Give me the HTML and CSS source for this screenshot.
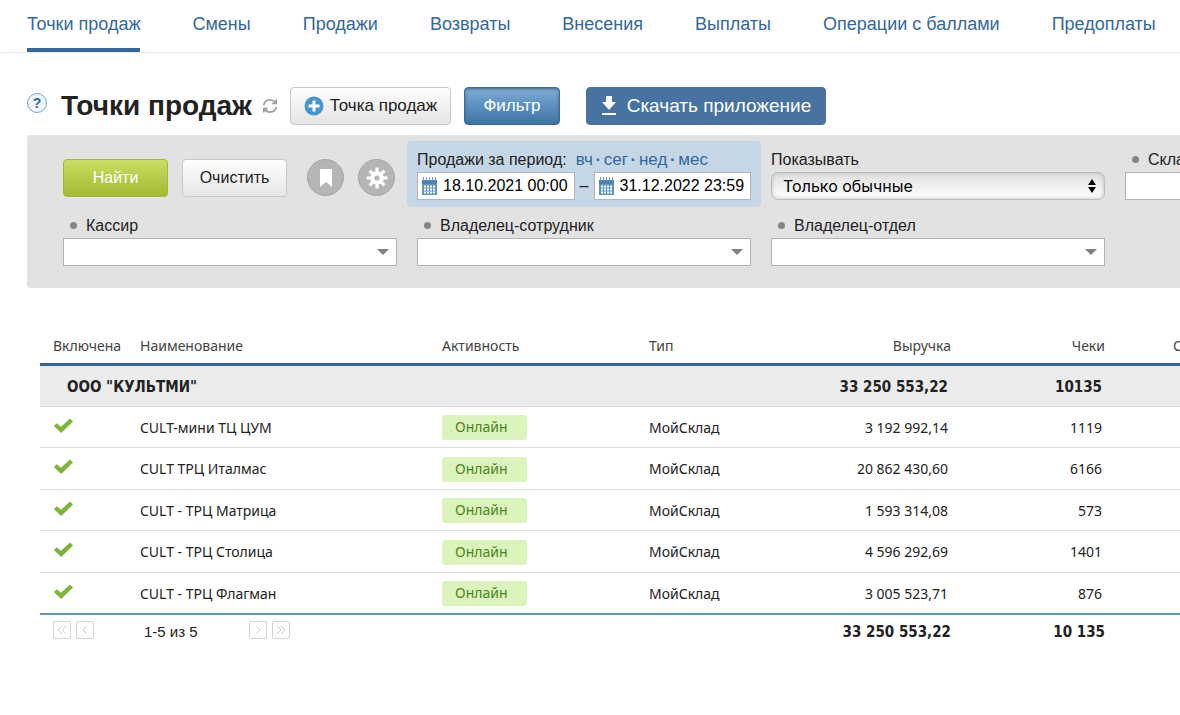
FILE: index.html
```html
<!DOCTYPE html>
<html lang="ru">
<head>
<meta charset="utf-8">
<title>Точки продаж</title>
<link rel="stylesheet" href="styles.css">
</head>
<body>
<svg class="sprite" aria-hidden="true">
  <symbol id="check" viewBox="0 0 20 16"><path d="M.8 8 3.800 5.200l4.200 3.600L17 .6l3 3L8.200 15z" fill="#7db43a"/></symbol>
  <symbol id="calendar" viewBox="0 0 17 18"><path d="M1 3h15v15H1z" fill="#5f96c3"/><path d="M1 3h15v4H1z" fill="#4a84b4"/><path d="M2.500 0v4M5.500 0v4M8.500 0v4M11.500 0v4M14.500 0v4" stroke="#8199ad"/><path d="M3 9.500h11M3 12.500h11M3 15.500h11" stroke="#fff" stroke-width="2" stroke-dasharray="2 1"/></symbol>
</svg>

<nav class="tabs">
  <a class="tab tab-active" href="#">Точки продаж</a>
  <a class="tab" href="#">Смены</a>
  <a class="tab" href="#">Продажи</a>
  <a class="tab" href="#">Возвраты</a>
  <a class="tab" href="#">Внесения</a>
  <a class="tab" href="#">Выплаты</a>
  <a class="tab" href="#">Операции с баллами</a>
  <a class="tab" href="#">Предоплаты</a>
</nav>

<main class="page">
  <header class="toolbar">
    <button class="help" type="button" aria-label="Справка">?</button>
    <h1 class="title">Точки продаж</h1>
    <button class="refresh" type="button" aria-label="Обновить">
      <svg width="16" height="16" viewBox="0 0 16 16" fill="none" stroke="#9b9b9b" stroke-width="1.700"><path d="M1.800 7.200C2.200 4 4.800 2 8 2c2.200 0 4 .8 5.200 2.500M14.200 1.500v4h-4M14.200 8.800C13.800 12 11.200 14 8 14c-2.200 0-4-.8-5.200-2.500M1.800 14.500v-4h4"/></svg>
    </button>
    <button class="btn btn-add" type="button">
      <svg width="20" height="20" viewBox="0 0 20 20"><circle cx="10" cy="10" r="9.500" fill="#4496d1"/><path d="M10 4.500v11M4.500 10h11" stroke="#fff" stroke-width="3"/></svg>
      Точка продаж
    </button>
    <button class="btn btn-filter" type="button">Фильтр</button>
    <button class="btn btn-download" type="button">
      <svg width="16" height="20" viewBox="0 0 16 20" fill="#fff"><path d="M5 0h6v6h4l-7 8-7-8h4zM1 17h14v2H1z"/></svg>
      Скачать приложение
    </button>
  </header>

  <form class="filter">
    <div class="actions">
      <button class="btn btn-find" type="button">Найти</button>
      <button class="btn btn-clear" type="button">Очистить</button>
      <button class="round round-first" type="button" aria-label="Закладки"><svg width="12" height="18" viewBox="0 0 12 18"><path d="M0 0h12v18l-6-5-6 5z" fill="#fff"/></svg></button>
      <button class="round" type="button" aria-label="Настройки"><svg width="22" height="22" viewBox="-11 -11 22 22"><g stroke="#fff" stroke-width="3.200"><path d="M0-10.500v21M-10.500 0h21M-7.400-7.400 7.400 7.400M-7.400 7.400 7.400-7.400"/></g><circle r="6.800" fill="#fff"/><circle r="2.600" fill="#b5b5b5"/></svg></button>
    </div>
    <div class="field period">
      <div class="label-row">
        <label for="from">Продажи за период:</label>
        <span class="presets"><a href="#">вч</a><i>·</i><a href="#">сег</a><i>·</i><a href="#">нед</a><i>·</i><a href="#">мес</a></span>
      </div>
      <div class="range">
        <div class="box date"><svg width="17" height="18"><use href="#calendar"/></svg><input id="from" type="text" value="18.10.2021 00:00"></div>
        <span class="dash">–</span>
        <div class="box date"><svg width="17" height="18"><use href="#calendar"/></svg><input type="text" value="31.12.2022 23:59" aria-label="Конец периода"></div>
      </div>
    </div>
    <div class="field">
      <div class="label-row"><label for="show">Показывать</label></div>
      <div class="select-wrap">
        <select id="show" class="select"><option>Только обычные</option></select>
        <svg class="select-arrows" width="8" height="16" viewBox="0 0 8 16"><path d="M4 1l4 6H0zM4 15l4-6H0z"/></svg>
      </div>
    </div>
    <div class="field">
      <div class="label-row dotted"><label for="store">Склад</label></div>
      <div class="box"><input id="store" type="text"><button class="drop" type="button" aria-label="Выбрать склад"></button></div>
    </div>
    <div class="field">
      <div class="label-row dotted"><label for="cashier">Кассир</label></div>
      <div class="box"><input id="cashier" type="text"><button class="drop" type="button" aria-label="Выбрать кассира"></button></div>
    </div>
    <div class="field">
      <div class="label-row dotted"><label for="owner">Владелец-сотрудник</label></div>
      <div class="box"><input id="owner" type="text"><button class="drop" type="button" aria-label="Выбрать сотрудника"></button></div>
    </div>
    <div class="field">
      <div class="label-row dotted"><label for="dept">Владелец-отдел</label></div>
      <div class="box"><input id="dept" type="text"><button class="drop" type="button" aria-label="Выбрать отдел"></button></div>
    </div>
  </form>

  <table class="grid">
    <colgroup><col class="c-on"><col class="c-name"><col class="c-act"><col class="c-type"><col class="c-rev"><col class="c-chk"><col></colgroup>
    <thead>
      <tr><th>Включена</th><th>Наименование</th><th>Активность</th><th>Тип</th><th class="num">Выручка</th><th class="num">Чеки</th><th class="avg">Средний чек</th></tr>
    </thead>
    <tbody>
      <tr class="group"><td colspan="4">ООО "КУЛЬТМИ"</td><td class="num">33 250 553,22</td><td class="num">10135</td><td></td></tr>
      <tr><td><svg class="check" width="20" height="16"><use href="#check"/></svg></td><td>CULT-мини ТЦ ЦУМ</td><td><span class="badge">Онлайн</span></td><td>МойСклад</td><td class="num">3 192 992,14</td><td class="num">1119</td><td></td></tr>
      <tr><td><svg class="check" width="20" height="16"><use href="#check"/></svg></td><td>CULT ТРЦ Италмас</td><td><span class="badge">Онлайн</span></td><td>МойСклад</td><td class="num">20 862 430,60</td><td class="num">6166</td><td></td></tr>
      <tr><td><svg class="check" width="20" height="16"><use href="#check"/></svg></td><td>CULT - ТРЦ Матрица</td><td><span class="badge">Онлайн</span></td><td>МойСклад</td><td class="num">1 593 314,08</td><td class="num">573</td><td></td></tr>
      <tr><td><svg class="check" width="20" height="16"><use href="#check"/></svg></td><td>CULT - ТРЦ Столица</td><td><span class="badge">Онлайн</span></td><td>МойСклад</td><td class="num">4 596 292,69</td><td class="num">1401</td><td></td></tr>
      <tr><td><svg class="check" width="20" height="16"><use href="#check"/></svg></td><td>CULT - ТРЦ Флагман</td><td><span class="badge">Онлайн</span></td><td>МойСклад</td><td class="num">3 005 523,71</td><td class="num">876</td><td></td></tr>
    </tbody>
    <tfoot>
      <tr>
        <td colspan="4">
          <div class="pager">
            <button type="button" aria-label="Первая"><svg width="10" height="10" viewBox="0 0 10 10"><path d="M5 1 1 5l4 4M9 1 5 5l4 4"/></svg></button>
            <button type="button" aria-label="Назад"><svg width="10" height="10" viewBox="0 0 10 10"><path d="M6.500 1.500 3 5l3.500 3.500"/></svg></button>
            <span class="pager-text">1-5 из 5</span>
            <button type="button" aria-label="Вперёд"><svg width="10" height="10" viewBox="0 0 10 10"><path d="M3.500 1.500 7 5 3.500 8.500"/></svg></button>
            <button type="button" aria-label="Последняя"><svg width="10" height="10" viewBox="0 0 10 10"><path d="m1 1 4 4-4 4M5 1l4 4-4 4"/></svg></button>
          </div>
        </td>
        <td class="num">33 250 553,22</td><td class="num">10 135</td><td></td>
      </tr>
    </tfoot>
  </table>
</main>
</body>
</html>
```
FILE: styles.css
```css
* { box-sizing: border-box; }

body {
  margin: 0;
  overflow-x: hidden;
  background: #fff;
  color: #222;
  font: 16px/20px "Liberation Sans", sans-serif;
}

button, input, select { font: inherit; margin: 0; }
button { cursor: pointer; }

.sprite { display: none; }

.tabs {
  display: flex;
  gap: 52px;
  padding: 0 27px;
  border-bottom: 1px solid #ebebeb;
  overflow: hidden;
}

.tab {
  padding: 14px 0;
  border-bottom: 4px solid transparent;
  color: #33689b;
  font-size: 18px;
  text-decoration: none;
  white-space: nowrap;
}

.tab-active { border-color: #33689b; }

.page { padding: 34px 0 0 27px; overflow: hidden; }

.toolbar { display: flex; align-items: center; }

.help {
  width: 20px;
  height: 20px;
  margin-bottom: 6px;
  padding: 0;
  border: 1px solid #78a3cc;
  border-radius: 50%;
  background: #eef6fd;
  color: #33689b;
  font-size: 14px;
  font-weight: bold;
  line-height: 18px;
}

.title {
  margin: 0 10px 0 14px;
  font-size: 28px;
  line-height: 36px;
  white-space: nowrap;
}

.refresh {
  display: flex;
  margin-right: 12px;
  padding: 0;
  border: 0;
  background: none;
}

.btn {
  display: flex;
  align-items: center;
  justify-content: center;
  height: 38px;
  padding: 0;
  border: 1px solid #c8c8c8;
  border-radius: 4px;
  white-space: nowrap;
}

.btn-add {
  gap: 6px;
  width: 161px;
  background: linear-gradient(#fff, #e4e4e4);
  color: #222;
  font-size: 17px;
}

.btn-filter {
  width: 96px;
  margin-left: 13px;
  border-color: #3b6c98;
  background: linear-gradient(#7eacd5, #3d73a6);
  box-shadow: inset 0 1px 3px #3f6484;
  color: #fff;
  font-size: 17px;
}

.btn-download {
  gap: 10px;
  width: 240px;
  margin-left: 26px;
  border-color: #48729f;
  background: #48729f;
  color: #fff;
  font-size: 19px;
}

.filter {
  display: grid;
  grid-template-columns: repeat(4, 334px);
  column-gap: 20px;
  row-gap: 6px;
  width: max-content;
  margin-top: 10px;
  padding: 6px 36px 22px;
  border-radius: 4px;
  background: #e2e2e2;
}

.actions { display: flex; gap: 14px; padding-top: 18px; }

.btn-find, .btn-clear { width: 105px; }

.btn-find {
  border-color: #a2b83a;
  background: linear-gradient(#cbdd60, #a2b932);
  color: #fff;
}

.btn-clear { background: linear-gradient(#fff, #e6e6e6); color: #222; }

.round {
  display: flex;
  align-items: center;
  justify-content: center;
  width: 37px;
  height: 37px;
  padding: 0;
  border: 1px solid #a5a5a5;
  border-radius: 50%;
  background: #b5b5b5;
}

.round-first { margin-left: 6px; }

.field:nth-child(-n+4) { padding-top: 6px; }

.filter .period {
  margin: 0 -10px;
  padding: 6px 10px 7px;
  border-radius: 4px;
  background: #c5d7e7;
}

.label-row {
  display: flex;
  align-items: center;
  gap: 9px;
  height: 25px;
  white-space: nowrap;
}

.dotted { padding-left: 7px; }

.dotted::before {
  content: "";
  width: 7px;
  height: 7px;
  border-radius: 50%;
  background: #858585;
}

.presets { display: flex; font-size: 17px; }
.presets a { color: #33689b; text-decoration: none; }
.presets i { width: 11px; color: #33689b; font-style: normal; font-weight: bold; text-align: center; }

.box {
  display: flex;
  align-items: center;
  height: 28px;
  border: 1px solid #b4b4b4;
  background: #fff;
}

.box input {
  flex: 1;
  min-width: 0;
  height: 100%;
  padding: 0;
  border: 0;
  outline: 0;
  background: none;
  color: #000;
}

.range { display: flex; align-items: center; }
.date { flex: 1; gap: 5px; min-width: 0; padding-left: 3px; }
.date svg { flex: none; }
.dash { width: 19px; text-align: center; }

.drop {
  width: 26px;
  height: 100%;
  padding: 0 7px;
  border: 0;
  background: none;
}

.drop::before {
  content: "";
  display: block;
  border: 6px solid transparent;
  border-top-color: #808080;
  border-bottom: 0;
}

.select-wrap { display: grid; align-items: center; }
.select-wrap > * { grid-area: 1 / 1; }

.select {
  width: 100%;
  height: 28px;
  padding: 0 11px;
  border: 1px solid #bcbcbc;
  border-radius: 7px;
  appearance: none;
  background: linear-gradient(#e0e0e0, #fff);
  box-shadow: inset 0 0 4px #bbb;
  color: #000;
  font-family: Inter, sans-serif;
}

.select-arrows { justify-self: end; margin-right: 9px; pointer-events: none; }

.grid {
  width: calc(100% - 13px);
  margin: 40px 0 0 13px;
  border-collapse: collapse;
  table-layout: fixed;
  font: 14px/20px "Noto Sans", sans-serif;
}

.c-on { width: 100px; }
.c-name { width: 302px; }
.c-act { width: 207px; }
.c-type { width: 150px; }
.c-rev { width: 152px; }
.c-chk { width: 154px; }

.grid th, .grid td {
  padding: 2px 0 0;
  text-align: left;
  white-space: nowrap;
}

.grid th:first-child, .grid td:first-child { padding-left: 13px; }
.grid th { height: 36px; color: #444; font-weight: normal; }
.grid .num { text-align: right; }
.grid .avg { padding-left: 68px; }
.grid tbody .num { padding-right: 3px; }
.grid thead { border-bottom: 3px solid #33689b; }

.grid tbody tr { height: 41px; border-bottom: 1px solid #dcdcdc; }
.grid tbody tr:nth-child(odd), .grid tbody tr:last-child { height: 42px; }

.grid .group, .grid tfoot {
  font: bold 15px/20px "DejaVu Sans Condensed", "DejaVu Sans", sans-serif;
}

.grid .group { background: #ececec; }
.grid .group td:first-child { padding-left: 27px; }
.grid tbody tr:last-child { border-bottom: 2px solid #6795bd; }

.check { display: block; margin-bottom: 4px; }

.badge {
  display: block;
  width: 85px;
  padding: 2px 13px 3px;
  border-radius: 3px;
  background: #daf4bc;
  color: #4e8420;
}

.grid tfoot td { height: 33px; }

.pager {
  display: flex;
  align-items: center;
  gap: 5px;
  font: 15px/20px "Liberation Sans", sans-serif;
}

.pager button {
  display: flex;
  align-items: center;
  justify-content: center;
  width: 18px;
  height: 18px;
  margin-bottom: 4px;
  padding: 0;
  border: 1px solid #d4d4d4;
  border-radius: 2px;
  background: #fff;
}

.pager svg { fill: none; stroke: #ccc; }
.pager-text { width: 145px; padding-left: 45px; }
```
